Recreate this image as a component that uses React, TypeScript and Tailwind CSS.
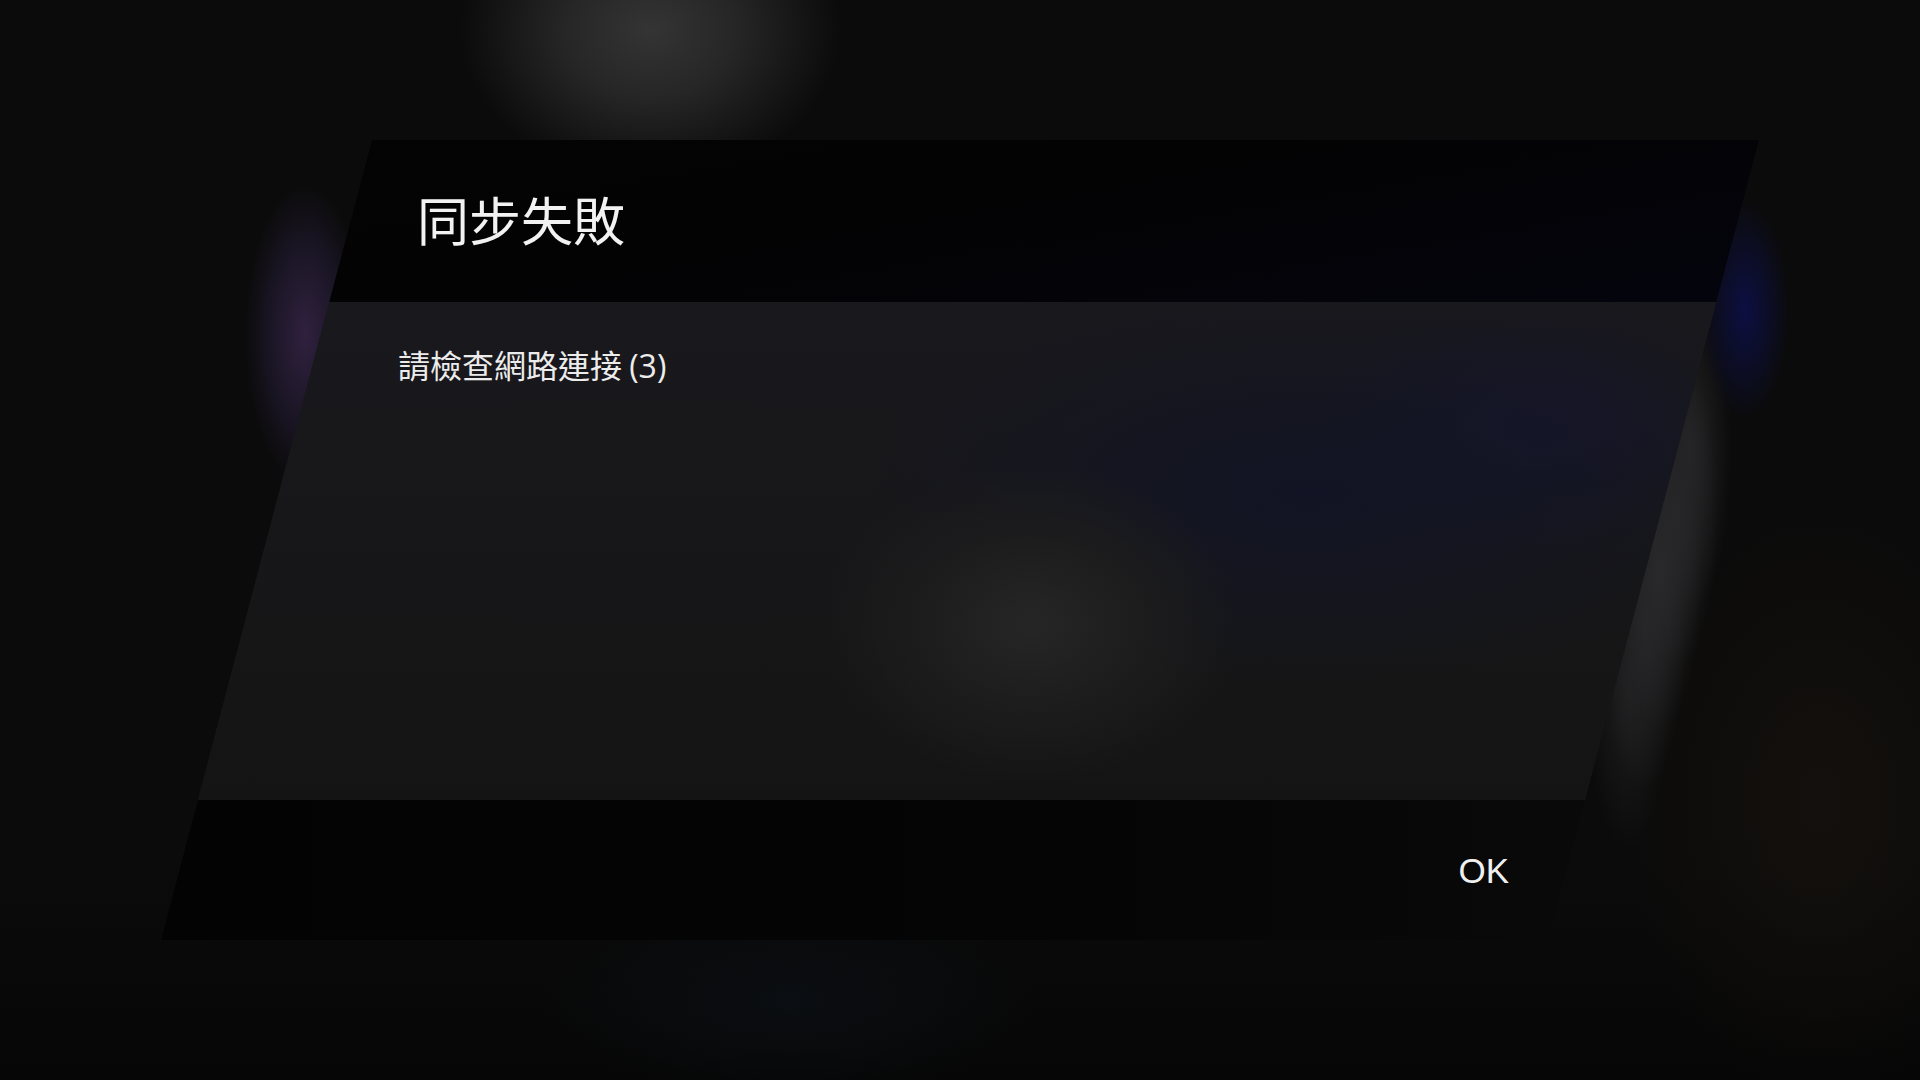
import React from "react";

export default function App() {
  return (
    <div className="w-full h-[1080px] overflow-hidden flex items-center justify-center bg-[#0a0a0a] [background-image:radial-gradient(ellipse_190px_150px_at_650px_30px,#343434,#262626_45%,transparent),radial-gradient(ellipse_60px_150px_at_305px_335px,#30213f,#1a1524_60%,transparent),radial-gradient(ellipse_45px_110px_at_1745px_310px,#0c0f42,#0c0d22_60%,transparent),radial-gradient(ellipse_42px_160px_at_1690px_450px,#252527,transparent),radial-gradient(ellipse_42px_160px_at_1676px_510px,#29292b,transparent),radial-gradient(ellipse_42px_160px_at_1660px_570px,#29292b,transparent),radial-gradient(ellipse_42px_160px_at_1644px_630px,#242426,transparent),radial-gradient(ellipse_42px_160px_at_1628px_690px,#1e1e1f,transparent),radial-gradient(ellipse_200px_300px_at_1820px_800px,#14100d,transparent),radial-gradient(ellipse_250px_100px_at_790px_1000px,#0b0e12,transparent),linear-gradient(180deg,#0b0b0b_0%,#0b0b0b_80%,#060606_100%)]">
      <div className="w-[1598px] h-[800px] flex flex-col [clip-path:polygon(211px_0,100%_0,1387px_100%,0_100%)] font-['Noto_Sans_CJK_TC','Noto_Sans',sans-serif]">
        <div className="h-[162px] shrink-0 flex items-center pl-[256px] bg-[linear-gradient(170deg,#040404_0%,#030303_40%,#04040d_100%)]">
          <h1 className="text-[52px] leading-none font-normal text-[#f2f2f2] -translate-y-[2px]">
            同步失敗
          </h1>
        </div>
        <div className="flex-1 pl-[237px] pt-[46px] bg-[#141414] [background-image:radial-gradient(ellipse_210px_160px_at_870px_322px,#262626,#1c1c1d_55%,transparent),radial-gradient(ellipse_450px_190px_at_1150px_190px,#121425,transparent),radial-gradient(ellipse_230px_125px_at_1375px_125px,#16162a,transparent),linear-gradient(180deg,#19181d_0%,#171719_45%,#141414_100%)]">
          <p className="text-[32px] leading-none text-[#ececec]">
            請檢查網路連接 <span className="font-['Open_Sans',sans-serif]">(3)</span>
          </p>
        </div>
        <div className="h-[140px] shrink-0 flex items-center justify-end pr-[250px] bg-[linear-gradient(90deg,#030303_0%,#050505_60%,#0b0b0b_100%)]">
          <span className="text-[35px] leading-none text-[#f0f0f0] font-['Liberation_Sans',sans-serif]">
            OK
          </span>
        </div>
      </div>
    </div>
  );
}
